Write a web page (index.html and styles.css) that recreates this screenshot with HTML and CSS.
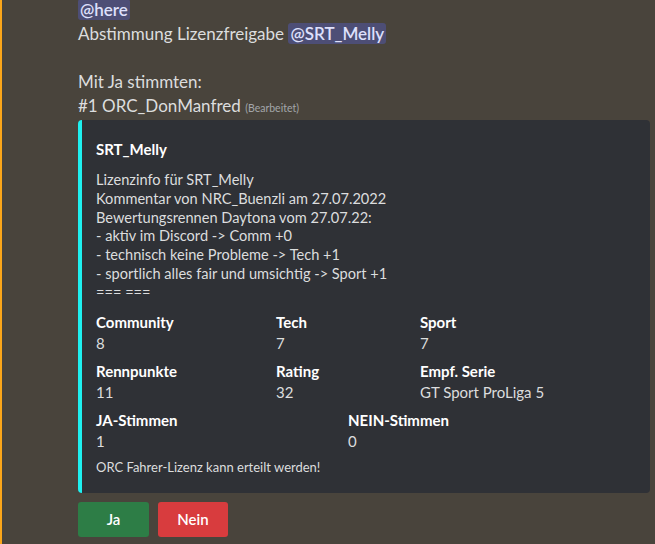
FILE: index.html
```html
<!DOCTYPE html>
<html lang="de">
<head>
<meta charset="utf-8">
<title>Abstimmung Lizenzfreigabe</title>
<link rel="stylesheet" href="styles.css">
</head>
<body>
<div class="message">
  <div class="content">
    <div class="line"><span class="mention">@here</span></div>
    <div class="line">Abstimmung Lizenzfreigabe <span class="mention">@SRT_Melly</span></div>
    <div class="line blank"></div>
    <div class="line">Mit Ja stimmten:</div>
    <div class="line">#1 ORC_DonManfred <span class="edited">(Bearbeitet)</span></div>
  </div>
  <div class="embed">
    <div class="embed-title">SRT_Melly</div>
    <div class="embed-desc">
      <div>Lizenzinfo für SRT_Melly</div>
      <div>Kommentar von NRC_Buenzli am 27.07.2022</div>
      <div>Bewertungsrennen Daytona vom 27.07.22:</div>
      <div>- aktiv im Discord -&gt; Comm +0</div>
      <div>- technisch keine Probleme -&gt; Tech +1</div>
      <div>- sportlich alles fair und umsichtig -&gt; Sport +1</div>
      <div>=== ===</div>
    </div>
    <div class="fields">
      <div class="row three">
        <div class="field"><div class="fname">Community</div><div class="fval">8</div></div>
        <div class="field"><div class="fname">Tech</div><div class="fval">7</div></div>
        <div class="field"><div class="fname">Sport</div><div class="fval">7</div></div>
      </div>
      <div class="row three">
        <div class="field"><div class="fname">Rennpunkte</div><div class="fval">11</div></div>
        <div class="field"><div class="fname">Rating</div><div class="fval">32</div></div>
        <div class="field"><div class="fname">Empf. Serie</div><div class="fval">GT Sport ProLiga 5</div></div>
      </div>
      <div class="row two">
        <div class="field"><div class="fname">JA-Stimmen</div><div class="fval">1</div></div>
        <div class="field"><div class="fname">NEIN-Stimmen</div><div class="fval">0</div></div>
      </div>
    </div>
    <div class="embed-footer">ORC Fahrer-Lizenz kann erteilt werden!</div>
  </div>
  <div class="buttons">
    <button class="btn btn-yes">Ja</button>
    <button class="btn btn-no">Nein</button>
  </div>
</div>
</body>
</html>
```

FILE: styles.css
```css
html, body {
  margin: 0;
  padding: 0;
}
body {
  width: 655px;
  height: 544px;
  overflow: hidden;
  background: #49443c;
  border-left: 2px solid #faa61a;
  box-sizing: border-box;
  font-family: "Lato", "Noto Sans", sans-serif;
  color: #dcddde;
}
.message {
  padding-left: 76px;
  margin-top: -2px;
}
.content {
  font-size: 17px;
  line-height: 24px;
}
.line {
  height: 24px;
  white-space: nowrap;
}
.mention {
  background: rgba(88, 101, 242, 0.32);
  color: #dee0fc;
  font-weight: 600;
  border-radius: 3px;
  padding: 0 2px;
}
.edited {
  font-size: 10.5px;
  color: #a3a6aa;
}
.embed {
  margin-top: 2px;
  width: 572px;
  box-sizing: border-box;
  background: #2f3136;
  border-left: 4px solid #1ef0f0;
  border-radius: 4px;
  padding: 9px 16px 17px 14px;
}
.embed-title {
  margin-top: 10px;
  font-size: 15px;
  font-weight: 700;
  color: #ffffff;
  line-height: 20px;
}
.embed-desc {
  margin-top: 12px;
  font-size: 14.6px;
  line-height: 18.8px;
  color: #dcddde;
}
.fields {
  margin-top: 10px;
  display: flex;
  flex-direction: column;
  gap: 9px;
}
.row {
  display: grid;
}
.row.three {
  grid-template-columns: 180px 144px 1fr;
}
.row.two {
  grid-template-columns: 252px 1fr;
}
.fname {
  font-size: 15px;
  font-weight: 700;
  color: #ffffff;
  line-height: 19px;
  margin-bottom: 2px;
}
.fval {
  font-size: 15px;
  line-height: 19px;
  color: #dcddde;
}
.embed-footer {
  margin-top: 8px;
  font-size: 13px;
  line-height: 17px;
  color: #dcddde;
}
.buttons {
  margin-top: 9px;
  display: flex;
  gap: 9px;
}
.btn {
  height: 35px;
  border: none;
  border-radius: 3px;
  color: #ffffff;
  font-family: "Lato", "Noto Sans", sans-serif;
  font-size: 15px;
  font-weight: 600;
  padding: 0;
}
.btn-yes {
  width: 71px;
  background: #2d7d46;
}
.btn-no {
  width: 70px;
  background: #d83c3e;
}
```
